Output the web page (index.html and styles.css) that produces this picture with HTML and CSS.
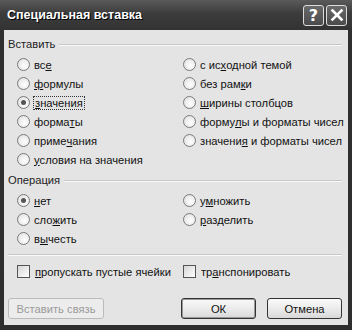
FILE: index.html
```html
<!DOCTYPE html>
<html lang="ru">
<head>
<meta charset="utf-8">
<link rel="stylesheet" href="styles.css">
</head>
<body>
<div class="window">
  <div class="titlebar">
    <span class="title">Специальная вставка</span>
    <div class="tbtns">
      <span class="tbtn">?</span>
      <span class="tbtn"><svg width="14" height="14" viewBox="0 0 14 14"><path d="M2.5 2.5 L11.5 11.5 M11.5 2.5 L2.5 11.5" stroke="#fff" stroke-width="2.6" stroke-linecap="square"/></svg></span>
    </div>
  </div>
  <div class="body">
    <div class="ghead"><span>Вставить</span><i></i></div>
    <div class="grid paste">
      <div class="col">
        <label class="opt"><span class="radio"></span>вс<u>е</u></label>
        <label class="opt"><span class="radio"></span><u>ф</u>ормулы</label>
        <label class="opt"><span class="radio on"></span><span class="focus"><u>з</u>начения</span></label>
        <label class="opt"><span class="radio"></span>форма<u>т</u>ы</label>
        <label class="opt"><span class="radio"></span>приме<u>ч</u>ания</label>
        <label class="opt"><span class="radio"></span><u>у</u>словия на значения</label>
      </div>
      <div class="col">
        <label class="opt"><span class="radio"></span>с ис<u>х</u>одной темой</label>
        <label class="opt"><span class="radio"></span>без рам<u>к</u>и</label>
        <label class="opt"><span class="radio"></span><u>ш</u>ирины столбцов</label>
        <label class="opt"><span class="radio"></span>форму<u>л</u>ы и форматы чисел</label>
        <label class="opt"><span class="radio"></span>значени<u>я</u>&nbsp;и форматы чисел</label>
      </div>
    </div>
    <div class="ghead op"><span>Операция</span><i></i></div>
    <div class="grid">
      <div class="col">
        <label class="opt"><span class="radio on"></span><u>н</u>ет</label>
        <label class="opt"><span class="radio"></span>сло<u>ж</u>ить</label>
        <label class="opt"><span class="radio"></span>в<u>ы</u>честь</label>
      </div>
      <div class="col">
        <label class="opt"><span class="radio"></span>у<u>м</u>ножить</label>
        <label class="opt"><span class="radio"></span><u>р</u>азделить</label>
      </div>
    </div>
    <div class="sep"></div>
    <div class="grid checks">
      <label class="opt"><span class="check"></span><u>п</u>ропускать пустые ячейки</label>
      <label class="opt"><span class="check"></span>тр<u>а</u>нспонировать</label>
    </div>
    <div class="buttons">
      <span class="btn disabled">Вставить связь</span>
      <div class="right">
        <span class="btn ok">ОК</span>
        <span class="btn">Отмена</span>
      </div>
    </div>
  </div>
</div>
</body>
</html>
```
FILE: styles.css
```css
* { box-sizing: border-box; }
html, body { margin: 0; padding: 0; }
body { width: 352px; height: 330px; overflow: hidden; background: #2e2e2e; }
.window {
  width: 352px; height: 330px;
  display: flex; flex-direction: column;
  background: linear-gradient(#4a4a4a, #303030 30px, #2e2e2e);
  font-family: "Liberation Sans", Arial, sans-serif;
  font-size: 11.2px;
  color: #111;
}
.titlebar {
  height: 30px; flex: none;
  display: flex; align-items: center; justify-content: space-between;
  padding: 0 5px 0 7px;
  background: linear-gradient(#5a5a5a, #3c3c3c 45%, #333 100%);
}
.title {
  color: #fff; font-family: "Liberation Sans", sans-serif; font-weight: bold;
  font-size: 12.5px;
  text-shadow: 1px 1px 0 #000;
}
.tbtns { display: flex; gap: 2px; }
.tbtn {
  width: 21px; height: 21px;
  border: 1px solid #ddd; border-radius: 3px;
  background: linear-gradient(#6a6a6a, #4a4a4a);
  color: #fff; font-weight: bold; font-size: 16px;
  display: flex; align-items: center; justify-content: center;
  font-family: "DejaVu Sans", sans-serif;
}
.body {
  flex: 1;
  margin: 0 4px 5px 4px;
  background: #e4e4e4;
  padding: 6px 6px 0 4px;
}
.ghead { display: flex; align-items: center; height: 16px; }
.ghead span { color: #222; padding-right: 4px; }
.ghead i { flex: 1; height: 2px; border-top: 1px solid #c8c8c8; border-bottom: 1px solid #fafafa; margin-top: 1px; }
.ghead.op { margin-top: 3px; }
.grid { display: grid; grid-template-columns: 166px 1fr; padding-left: 9px; margin-top: 3px; }
.col { display: flex; flex-direction: column; }
.opt { display: flex; align-items: center; height: 19px; white-space: nowrap; color: #111; }
u { text-decoration: underline; text-underline-offset: 1px; }
.radio {
  width: 13px; height: 13px; border-radius: 50%;
  border: 1px solid #7a7a7a;
  background: radial-gradient(circle at 60% 60%, #fff, #dcdcdc);
  margin-right: 4px; flex: none; position: relative;
}
.radio.on::after {
  content: ""; position: absolute; left: 3px; top: 3px; width: 5px; height: 5px;
  border-radius: 50%; background: #555;
}
.focus { outline: 1px dotted #333; outline-offset: 0; padding: 0 1px; }
.sep { height: 2px; border-top: 1px solid #c8c8c8; border-bottom: 1px solid #fafafa; margin: 6px 0 0 0; }
.checks { margin-top: 6px; }
.check {
  width: 13px; height: 13px; border: 1px solid #555;
  background: linear-gradient(135deg, #d6d6d6, #fff);
  margin-right: 5px; flex: none;
}
.buttons { display: flex; justify-content: space-between; margin-top: 17px; padding-left: 0; }
.right { display: flex; gap: 11px; }
.btn {
  height: 21px; width: 75px;
  display: flex; align-items: center; justify-content: center;
  border: 1px solid #333; border-radius: 3px;
  background: linear-gradient(#fafafa, #e8e8e8 60%, #d8d8d8);
  color: #111;
}
.btn.ok { box-shadow: inset 0 0 0 1px #999; }
.btn.disabled { width: 96px; border-color: #bbb; color: #9a9a9a; background: #ececec; }
```
